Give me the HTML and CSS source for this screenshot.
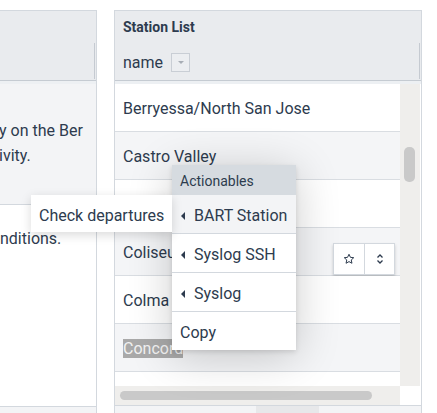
FILE: index.html
```html
<!DOCTYPE html>
<html>
<head>
<meta charset="utf-8">
<link rel="stylesheet" href="styles.css">
</head>
<body>
<div class="page">
  <section class="panel left">
    <div class="p-head">
      <div class="p-title"></div>
      <div class="p-filter"></div>
    </div>
    <div class="p-gap"></div>
    <div class="l-body">
      <div class="l-block shade"><p>y on the Ber<br>ivity.</p></div>
      <div class="l-block plain"><p>nditions.</p></div>
    </div>
    <div class="p-foot"></div>
  </section>

  <section class="panel right">
    <div class="p-head">
      <div class="p-title">Station List</div>
      <div class="p-filter"><span>name</span><span class="dd"><span class="dd-caret"></span></span></div>
    </div>
    <div class="p-gap"></div>
    <div class="grid-area">
      <div class="rows-col">
        <div class="rows">
          <div class="row">Berryessa/North San Jose</div>
          <div class="row alt">Castro Valley</div>
          <div class="row"></div>
          <div class="row alt hover">Coliseum
            <div class="row-tools">
              <button class="tool">
                <svg width="12" height="12" viewBox="0 0 24 24"><path d="M12 2.5l2.9 6.2 6.6.7-5 4.5 1.4 6.6L12 17.2l-5.9 3.3 1.4-6.6-5-4.5 6.6-.7z" fill="none" stroke="#2d3b4e" stroke-width="2" stroke-linejoin="round"/></svg>
              </button>
              <button class="tool">
                <svg width="10" height="12" viewBox="0 0 10 12"><path d="M2.5 4.5L5 2l2.5 2.5M2.5 7.5L5 10l2.5-2.5" fill="none" stroke="#2d3b4e" stroke-width="1.3"/></svg>
              </button>
            </div>
          </div>
          <div class="row">Colma</div>
          <div class="row alt"><span class="sel">Concord</span></div>
          <div class="row"></div>
        </div>
        <div class="hscroll"><div class="hthumb"></div></div>
      </div>
      <div class="vcol">
        <div class="vtrack"><div class="vthumb"></div></div>
        <div class="corner"></div>
      </div>
    </div>
    <div class="p-foot"><div class="foot-block"></div></div>
  </section>

  <div class="menu">
    <div class="menu-head">Actionables</div>
    <div class="menu-item active"><span class="caret"></span>BART Station</div>
    <div class="menu-item"><span class="caret"></span>Syslog SSH</div>
    <div class="menu-item"><span class="caret"></span>Syslog</div>
    <div class="menu-item last">Copy</div>
  </div>
  <div class="submenu">Check departures</div>
</div>
</body>
</html>
```

FILE: styles.css
```css
* { box-sizing: border-box; }
html, body { margin: 0; padding: 0; background: #fff; }
body {
  font-family: Roboto, "Noto Sans", sans-serif;
  color: #2d3b4e;
  width: 437px;
  height: 413px;
  overflow: hidden;
}
.page {
  position: relative;
  display: flex;
  gap: 17px;
  padding-top: 10px;
  height: 413px;
}
.panel {
  border: 1px solid #d3d8de;
  border-bottom: none;
  display: flex;
  flex-direction: column;
  background: #fff;
}
.panel.left { width: 97px; border-left: none; }
.panel.right { width: 308px; }

.p-head {
  background: #e9ebee;
  height: 70px;
  border-bottom: 1px solid #c5cbd2;
  display: flex;
  flex-direction: column;
}
.p-title {
  height: 32px;
  padding: 8px 0 0 8px;
  font-size: 14px;
  font-weight: 700;
  line-height: 16px;
}
.p-filter {
  flex: 1;
  margin-right: 1px;
  border-right: 1px solid #c5cad1;
  margin-bottom: 1px;
  display: flex;
  align-items: center;
  gap: 8px;
  padding: 4px 0 0 8px;
  font-size: 16px;
}
.dd {
  width: 19px;
  height: 19px;
  border: 1px solid #c9ced5;
  background: #eceef1;
  display: flex;
  align-items: center;
  justify-content: center;
  margin-top: -1px;
}
.dd-caret {
  width: 0; height: 0;
  border-left: 3.5px solid transparent;
  border-right: 3.5px solid transparent;
  border-top: 3.5px solid #a7adb5;
}
.p-gap { height: 3px; background: #edf0f3; }

/* left */
.l-body { flex: 1; display: flex; flex-direction: column; }
.l-block p { margin: 0; font-size: 16px; line-height: 25px; white-space: nowrap; }
.l-block.shade {
  height: 121px;
  background: #f3f4f6;
  border-bottom: 1px solid #d3d8de;
  padding-top: 34px;
  margin-left: -1px;
}
.l-block.plain { flex: 1; padding-top: 21px; }
.p-foot {
  height: 8px;
  border-top: 1px solid #d3d8de;
  background: #f3f4f6;
}
.panel.left .p-foot { height: 7px; }

/* right */
.grid-area { display: flex; height: 322px; }
.rows-col { width: 285px; display: flex; flex-direction: column; }
.rows { height: 302px; overflow: hidden; }
.row {
  position: relative;
  height: 48px;
  border-bottom: 1px solid #d9dde2;
  padding: 2px 0 0 8px;
  font-size: 16px;
  line-height: 45px;
  white-space: nowrap;
  background: #fff;
}
.row.alt { background: #f4f5f7; }
.sel { background: #a9a9a9; color: #f2f2f2; }
.row-tools {
  position: absolute;
  top: 15px;
  right: 5px;
  display: flex;
  background: #fff;
  border: 1px solid #d3d8de;
  box-shadow: 0 2px 3px rgba(0,0,0,0.18);
}
.tool {
  width: 30px;
  height: 30px;
  border: none;
  background: #fff;
  padding: 0;
  display: flex;
  align-items: center;
  justify-content: center;
}
.tool + .tool { border-left: 1px solid #d3d8de; }
.hscroll {
  height: 19px;
  background: #efeeec;
  padding: 5px 28px 0 5px;
}
.hthumb { height: 9px; border-radius: 5px; background: #c9c9c9; }
.vcol { width: 21px; display: flex; flex-direction: column; }
.vtrack {
  height: 302px;
  background: #efeeec;
  width: 20px;
  padding: 63px 0 0 4px;
}
.vthumb { width: 11px; height: 35px; border-radius: 5px; background: #c9c9c9; }
.corner { flex: 1; background: #fff; }
.foot-block { margin-left: 141px; width: 63px; height: 100%; background: #e7e8ea; }

/* menu */
.menu {
  position: absolute;
  left: 172px;
  top: 165px;
  width: 124px;
  background: #fff;
  box-shadow: 0 6px 45px rgba(0,0,0,0.2), 0 2px 5px rgba(0,0,0,0.12);
}
.menu-head {
  height: 30px;
  background: #d6dbe0;
  font-size: 14px;
  line-height: 30px;
  padding: 1px 0 0 8px;
}
.menu-item {
  height: 39px;
  border-bottom: 1px solid #d3d8de;
  font-size: 16px;
  line-height: 34px;
  padding: 4px 0 0 8px;
  display: flex;
  align-items: center;
  white-space: nowrap;
}
.menu-item.last { border-bottom: none; height: 38px; }
.menu-item.active { background: #f3f4f6; }
.caret {
  width: 0; height: 0;
  border-top: 4px solid transparent;
  border-bottom: 4px solid transparent;
  border-right: 4px solid #2d3b4e;
  margin: 0 9px 0 1px;
}
.submenu {
  position: absolute;
  left: 31px;
  top: 195px;
  width: 141px;
  height: 37px;
  background: #fff;
  font-size: 16px;
  line-height: 37px;
  padding: 2px 0 0 8px;
  white-space: nowrap;
  box-shadow: 0 3px 10px rgba(0,0,0,0.15);
}
```
